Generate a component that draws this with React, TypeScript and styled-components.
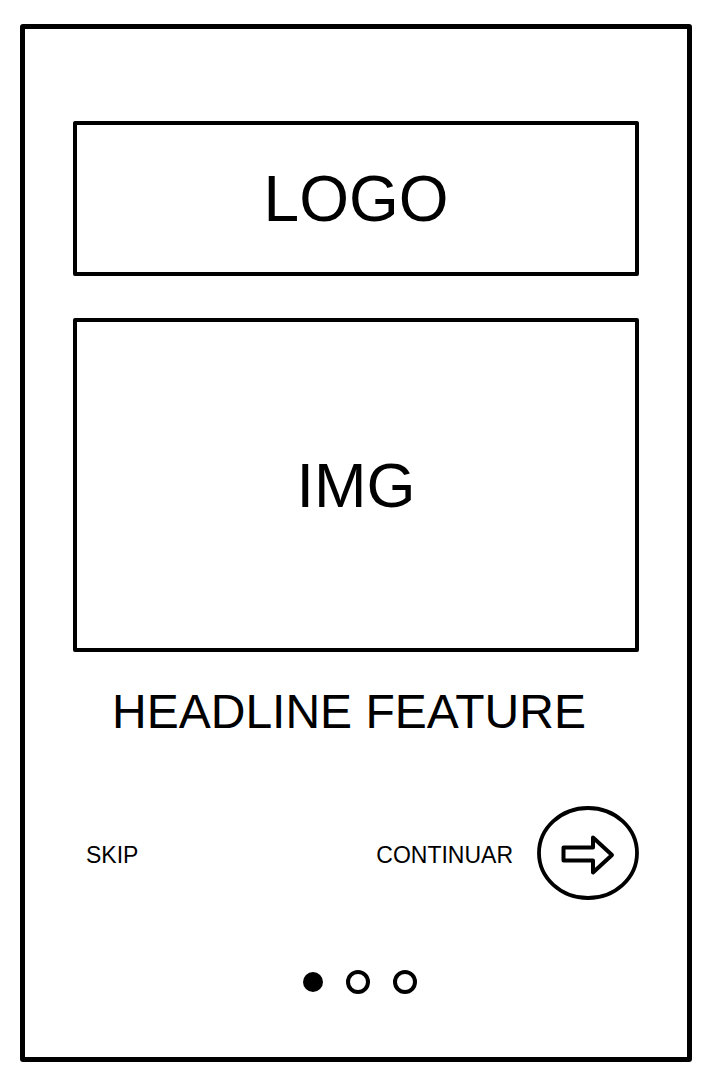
import React from 'react';
import styled, { createGlobalStyle } from 'styled-components';

const GlobalStyle = createGlobalStyle`
  html, body {
    margin: 0;
    padding: 0;
    background: #ffffff;
  }
  body {
    font-family: "Liberation Sans", Arial, sans-serif;
    color: #000;
  }
`;

const Frame = styled.div`
  box-sizing: border-box;
  margin: 24px 0 0 20px;
  width: 672px;
  height: 1038px;
  border: 5px solid #000;
  border-radius: 3px;
  padding: 92px 48px 0 48px;
  display: flex;
  flex-direction: column;
`;

const Placeholder = styled.div<{ $height: number; $top: number; $size: number }>`
  box-sizing: border-box;
  height: ${p => p.$height}px;
  margin-top: ${p => p.$top}px;
  border: 4px solid #000;
  border-radius: 2px;
  display: flex;
  align-items: center;
  justify-content: center;
  font-size: ${p => p.$size}px;
  line-height: 1;
`;

const Headline = styled.h1`
  margin: 32px 0 0 0;
  padding-right: 14px;
  font-size: 48px;
  font-weight: 400;
  line-height: 56px;
  text-align: center;
`;

const ActionRow = styled.div`
  margin-top: 66px;
  display: flex;
  align-items: center;
  justify-content: space-between;
`;

const TextButton = styled.span`
  font-size: 23px;
  line-height: 26px;
  padding-top: 4px;
`;

const SkipButton = styled(TextButton)`
  margin-left: 13px;
`;

const ContinueGroup = styled.div`
  display: flex;
  align-items: center;
  gap: 24px;
`;

const ArrowButton = styled.svg`
  display: block;
  width: 102px;
  height: 94px;
`;

const Dots = styled.div`
  margin-top: 70px;
  margin-left: 7px;
  display: flex;
  align-items: center;
  justify-content: center;
  gap: 23px;
`;

const Dot = styled.span<{ $active?: boolean }>`
  box-sizing: border-box;
  display: block;
  width: ${p => (p.$active ? 20 : 24)}px;
  height: ${p => (p.$active ? 20 : 24)}px;
  border-radius: 50%;
  background: ${p => (p.$active ? '#000' : 'transparent')};
  border: ${p => (p.$active ? 'none' : '4.5px solid #000')};
`;

const App: React.FC = () => {
  const pages = [true, false, false];

  return (
    <>
      <GlobalStyle />
      <Frame>
        <Placeholder $height={155} $top={0} $size={64}>LOGO</Placeholder>
        <Placeholder $height={334} $top={42} $size={63}>IMG</Placeholder>
        <Headline>HEADLINE FEATURE</Headline>
        <ActionRow>
          <SkipButton>SKIP</SkipButton>
          <ContinueGroup>
            <TextButton>CONTINUAR</TextButton>
            <ArrowButton viewBox="0 0 102 94">
              <ellipse cx="51" cy="47" rx="49" ry="45" fill="none" stroke="#000" strokeWidth="3.8" />
              <path
                d="M26.5 41.5 H56 V31.5 L75 49 L56 66.5 V54.5 H26.5 Z"
                fill="none"
                stroke="#000"
                strokeWidth="4"
                strokeLinejoin="round"
              />
            </ArrowButton>
          </ContinueGroup>
        </ActionRow>
        <Dots>
          {pages.map((active, i) => (
            <Dot key={i} $active={active} />
          ))}
        </Dots>
      </Frame>
    </>
  );
};

export default App;
